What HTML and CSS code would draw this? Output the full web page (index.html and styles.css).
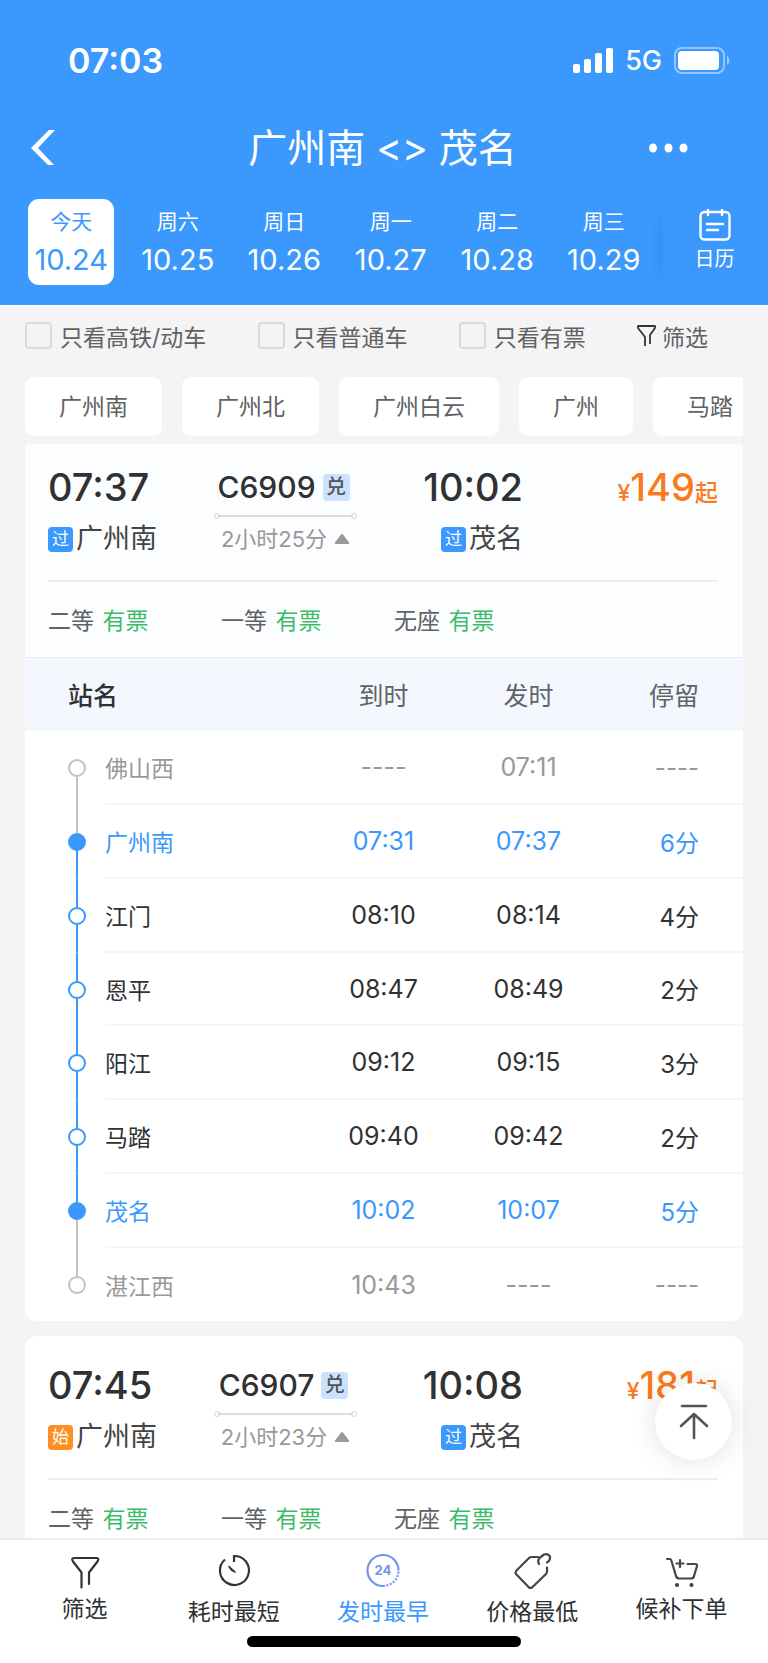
FILE: index.html
```html
<!DOCTYPE html>
<html lang="zh-CN">
<head>
<meta charset="utf-8">
<meta name="viewport" content="width=device-width, initial-scale=1">
<title>广州南 - 茂名</title>
<link rel="stylesheet" href="styles.css">
</head>
<body>
<div class="app">
  <header class="top">
    <div class="status">
      <span class="status-time">07:03</span>
      <div class="status-right">
        <svg class="signal" width="40" height="26" viewBox="0 0 40 26" fill="#fff" aria-hidden="true"><rect x="0" y="16" width="7" height="9" rx="2"/><rect x="11" y="11" width="7" height="14" rx="2"/><rect x="22" y="5" width="7" height="20" rx="2"/><rect x="33" y="0" width="7" height="25" rx="2"/></svg>
        <span class="network">5G</span>
        <svg class="battery" width="56" height="28" viewBox="0 0 56 28" aria-hidden="true"><rect x="1" y="1" width="49" height="25" rx="7" fill="none" stroke="#fff" stroke-opacity=".45" stroke-width="2"/><rect x="4" y="4" width="41" height="19" rx="4" fill="#fff"/><path d="M53 9c3 2 3 7 0 9z" fill="#fff" fill-opacity=".5"/></svg>
      </div>
    </div>
    <div class="titlebar">
      <button class="icon-btn" aria-label="返回"><svg width="26" height="36" viewBox="0 0 26 36" fill="#fff"><path d="M18 0h6L7 18l16 17h-6L0 18z"/></svg></button>
      <h1 class="title">广州南 &lt;&gt; 茂名</h1>
      <button class="icon-btn icon-btn-more" aria-label="更多"><svg width="40" height="10" viewBox="0 0 40 10" fill="#fff"><ellipse cx="4" cy="5" rx="4" ry="4.6"/><ellipse cx="19.500" cy="5" rx="4" ry="4.6"/><ellipse cx="34.500" cy="5" rx="4" ry="4.6"/></svg></button>
    </div>
    <div class="dates">
      <div class="date-list">
        <button class="date date-active"><span class="date-day">今天</span><span class="date-num">10.24</span></button>
        <button class="date"><span class="date-day">周六</span><span class="date-num">10.25</span></button>
        <button class="date"><span class="date-day">周日</span><span class="date-num">10.26</span></button>
        <button class="date"><span class="date-day">周一</span><span class="date-num">10.27</span></button>
        <button class="date"><span class="date-day">周二</span><span class="date-num">10.28</span></button>
        <button class="date"><span class="date-day">周三</span><span class="date-num">10.29</span></button>
      </div>
      <button class="calendar">
        <svg width="32" height="32" viewBox="0 0 32 32" fill="none" stroke="#fff" stroke-width="2.400" stroke-linecap="round"><rect x="1.500" y="3" width="29" height="27.500" rx="4"/><path d="M9 1v5M23 1v5M8 15h16M8 21h11"/></svg>
        <span>日历</span>
      </button>
    </div>
  </header>

  <main class="content">
    <div class="filters">
      <label class="check"><input type="checkbox">只看高铁/动车</label>
      <label class="check"><input type="checkbox">只看普通车</label>
      <label class="check"><input type="checkbox">只看有票</label>
      <button class="filter-btn"><svg width="20" height="22" viewBox="0 0 20 22" fill="none" stroke="#333" stroke-width="1.800" stroke-linejoin="round"><path d="M8 21v-9L1 3V1h17v2l-5 7v9"/></svg>筛选</button>
    </div>
    <div class="tags">
      <button class="tag">广州南</button>
      <button class="tag">广州北</button>
      <button class="tag">广州白云</button>
      <button class="tag">广州</button>
      <button class="tag">马踏</button>
    </div>

    <article class="card card-open">
      <div class="trip">
        <div class="stop">
          <span class="time">07:37</span>
          <span class="station"><i class="badge">过</i>广州南</span>
        </div>
        <div class="middle">
          <span class="code">C6909<i class="exchange">兑</i></span>
          <span class="track"></span>
          <button class="duration">2小时25分<svg width="16" height="10" viewBox="0 0 16 10" fill="#999"><path d="M7 .5q1-1 2 0l6 8q.5 1.500-1 1.500H2q-1.500 0-1-1.500z"/></svg></button>
        </div>
        <div class="stop stop-end">
          <span class="time">10:02</span>
          <span class="station"><i class="badge">过</i>茂名</span>
        </div>
        <div class="price"><span class="price-small">¥</span>149<b class="price-small">起</b></div>
      </div>
      <div class="seats">
        <span>二等 <em>有票</em></span>
        <span>一等 <em>有票</em></span>
        <span>无座 <em>有票</em></span>
      </div>
      <table class="stops">
        <colgroup><col class="w-rail"><col><col class="w-time"><col class="w-time"><col class="w-stay"></colgroup>
        <thead>
          <tr><th class="col-name" colspan="2">站名</th><th class="col-time">到时</th><th class="col-time">发时</th><th class="col-stay">停留</th></tr>
        </thead>
        <tbody>
          <tr class="out first"><td class="rail"><i class="dot"></i></td><td>佛山西</td><td class="col-time">----</td><td class="col-time">07:11</td><td class="col-stay">----</td></tr>
          <tr class="mark board"><td class="rail"><i class="dot"></i></td><td>广州南</td><td class="col-time">07:31</td><td class="col-time">07:37</td><td class="col-stay">6分</td></tr>
          <tr><td class="rail"><i class="dot"></i></td><td>江门</td><td class="col-time">08:10</td><td class="col-time">08:14</td><td class="col-stay">4分</td></tr>
          <tr><td class="rail"><i class="dot"></i></td><td>恩平</td><td class="col-time">08:47</td><td class="col-time">08:49</td><td class="col-stay">2分</td></tr>
          <tr><td class="rail"><i class="dot"></i></td><td>阳江</td><td class="col-time">09:12</td><td class="col-time">09:15</td><td class="col-stay">3分</td></tr>
          <tr><td class="rail"><i class="dot"></i></td><td>马踏</td><td class="col-time">09:40</td><td class="col-time">09:42</td><td class="col-stay">2分</td></tr>
          <tr class="mark alight"><td class="rail"><i class="dot"></i></td><td>茂名</td><td class="col-time">10:02</td><td class="col-time">10:07</td><td class="col-stay">5分</td></tr>
          <tr class="out last"><td class="rail"><i class="dot"></i></td><td>湛江西</td><td class="col-time">10:43</td><td class="col-time">----</td><td class="col-stay">----</td></tr>
        </tbody>
      </table>
    </article>

    <article class="card">
      <div class="trip">
        <div class="stop">
          <span class="time">07:45</span>
          <span class="station"><i class="badge badge-start">始</i>广州南</span>
        </div>
        <div class="middle">
          <span class="code">C6907<i class="exchange">兑</i></span>
          <span class="track"></span>
          <button class="duration">2小时23分<svg width="16" height="10" viewBox="0 0 16 10" fill="#999"><path d="M7 .5q1-1 2 0l6 8q.5 1.500-1 1.500H2q-1.500 0-1-1.500z"/></svg></button>
        </div>
        <div class="stop stop-end">
          <span class="time">10:08</span>
          <span class="station"><i class="badge">过</i>茂名</span>
        </div>
        <div class="price"><span class="price-small">¥</span>181<b class="price-small">起</b></div>
      </div>
      <div class="seats">
        <span>二等 <em>有票</em></span>
        <span>一等 <em>有票</em></span>
        <span>无座 <em>有票</em></span>
      </div>
    </article>
  </main>

  <button class="to-top" aria-label="回到顶部"><svg width="30" height="36" viewBox="0 0 30 36" fill="none" stroke="#555" stroke-width="2.600" stroke-linecap="round" stroke-linejoin="round"><path d="M3 2h24M15 34V10M2 22l13-12 13 12"/></svg></button>

  <footer class="bottom">
    <nav class="nav">
      <button class="nav-item nav-item-tight"><svg width="40" height="40" viewBox="0 0 40 40" fill="none" stroke="#333" stroke-width="2.200" stroke-linejoin="round" stroke-linecap="round"><path d="M16.500 35.500V20.500L8 9.500Q6 6 9 6h22.500Q34.500 6 32.500 9.500L24 20.500V32"/></svg>筛选</button>
      <button class="nav-item"><svg width="40" height="40" viewBox="0 0 40 40" fill="none" stroke="#333" stroke-width="2.200"><path d="M20 10V4a14.500 14.500 0 1 1-9 3.500"/><path d="M15 14.500l6 5.500-3.500-2z" stroke-width="1.600" fill="#333" stroke-linejoin="round"/></svg>耗时最短</button>
      <button class="nav-item nav-item-on"><svg width="40" height="40" viewBox="0 0 40 40" fill="none" stroke="#6f95ec" stroke-width="2.200"><path d="M35.500 18.500A15.500 15.500 0 1 0 20 34"/><path d="M20 34A15.500 15.500 0 0 0 35.500 18.500" stroke-dasharray="2 1.500"/><text class="clock-text" x="20" y="23" text-anchor="middle">24</text></svg>发时最早</button>
      <button class="nav-item"><svg width="40" height="40" viewBox="0 0 40 40" fill="none" stroke="#444" stroke-width="2.200" stroke-linecap="round" stroke-linejoin="round"><path d="M26 5H19.500Q18 5 17 6L4 19q-1 1.500 0 3L17 35.500q1.500 1 3 0L34 22q1-1 1-2.500v-4"/><path d="M27 12q-2-3.500 1-6.500l4-3q4-1.500 6 2 .5 4-3 6"/></svg>价格最低</button>
      <button class="nav-item nav-item-tight"><svg width="40" height="40" viewBox="0 0 40 40" fill="none" stroke="#444" stroke-width="2.200" stroke-linecap="round" stroke-linejoin="round"><path d="M6 7h3q1 0 1.500 2l4.500 15q1 2.500 3 2.500h12q2.500 0 3-2.500l3-10q.5-2-2-2h-7.500M19 8v7M15.500 11.500h7"/><circle cx="16" cy="33" r="1" fill="#444"/><circle cx="30.500" cy="33" r="1" fill="#444"/></svg>候补下单</button>
    </nav>
    <div class="home-bar"></div>
  </footer>
</div>
</body>
</html>
```

FILE: styles.css
```css
:root {
  --blue: #3b98fd;
  --ink: #303133;
  --grey: #999;
}

* { box-sizing: border-box; }

body {
  margin: 0;
  background: #f4f4f4;
  color: var(--ink);
  font-family: Inter, "Noto Sans CJK SC", sans-serif;
  font-size: 23px;
}

button {
  margin: 0;
  padding: 0;
  border: 0;
  background: none;
  color: inherit;
  font: inherit;
}

i, em { font-style: normal; }
svg { display: block; flex: none; }

.app {
  position: relative;
  display: flex;
  flex-direction: column;
  height: 100vh;
}

/* Header */
.top {
  flex: none;
  padding-bottom: 20px;
  border-bottom: 1px solid #fff;
  background: var(--blue);
  color: #fff;
}

.status {
  display: flex;
  align-items: center;
  justify-content: space-between;
  padding: 40px 38px 0 68px;
  line-height: 42px;
}

.status-time { font-size: 34px; font-weight: 600; }
.status-right { display: flex; align-items: center; gap: 12px; }
.network { font-size: 27px; font-weight: 500; }

.titlebar {
  display: grid;
  grid-template-columns: 100px 1fr 100px;
  align-items: center;
  padding: 36px 34px 0 31px;
}

.icon-btn { height: 60px; }
.icon-btn-more { display: flex; align-items: center; padding-left: 15px; }

.title {
  margin: 0;
  font-size: 39px;
  font-weight: 400;
  line-height: 60px;
  text-align: center;
}

.dates { display: flex; padding-top: 21px; }

.date-list {
  flex: 1;
  display: grid;
  grid-template-columns: repeat(6, 1fr);
  justify-items: center;
  padding: 0 6px 0 18px;
}

.date {
  display: flex;
  flex-direction: column;
  align-items: center;
  width: 86px;
  height: 86px;
  padding-top: 7px;
  border-radius: 11px;
}

.date-active { background: #fff; color: var(--blue); }
.date-day { font-size: 21px; line-height: 32px; }
.date-num { font-size: 29px; line-height: 44px; }

.calendar {
  display: flex;
  flex-direction: column;
  align-items: center;
  width: 105px;
  margin-top: 10px;
  padding-right: 2px;
  background: var(--blue);
  box-shadow: -10px 0 10px -8px rgba(0, 60, 140, .12);
  font-size: 20px;
  line-height: 36px;
}

/* Filters */
.content {
  flex: 1;
  min-height: 0;
  padding: 0 25px;
  overflow: hidden auto;
  scrollbar-width: none;
}

.filters {
  display: flex;
  align-items: center;
  justify-content: space-between;
  height: 59px;
  padding-right: 35px;
  color: #606266;
}

.check, .filter-btn { display: flex; align-items: center; }
.check { gap: 8px; }
.filter-btn { gap: 5px; }

.check input {
  appearance: none;
  width: 27px;
  height: 27px;
  margin: 0;
  border: 2px solid #dadada;
  border-radius: 4px;
}

.tags {
  display: flex;
  gap: 20px;
  margin: 12px 0 8px;
  overflow: hidden;
}

.tag {
  flex: none;
  height: 59px;
  padding: 0 34px 3px;
  border-radius: 9px;
  background: #fff;
  color: #606266;
}

/* Train cards */
.card {
  margin-bottom: 15px;
  border-radius: 12px;
  background: #fff;
  overflow: hidden;
}

.card-open { border-radius: 4px 4px 12px 12px; background: #fcfdff; }

.trip {
  display: grid;
  grid-template-columns: 166fr 143fr 166fr 195fr;
  margin: 0 25px 0 23px;
  padding: 26px 0 25px;
  border-bottom: 2px solid #efefef;
}

.card-open .trip { padding-top: 20px; }

.stop { display: flex; flex-direction: column; gap: 13px; }
.stop-end { align-items: flex-end; }

.time { font-size: 38px; font-weight: 500; line-height: 46px; }

.station {
  display: flex;
  align-items: center;
  gap: 3px;
  color: #444;
  font-size: 27px;
  line-height: 32px;
}

.badge {
  width: 25px;
  border-radius: 4px;
  background: var(--blue);
  color: #fff;
  font-size: 17px;
  line-height: 25px;
  text-align: center;
}

.badge-start { background: #fd8f24; }

.middle { display: flex; flex-direction: column; align-items: center; }

.code {
  display: flex;
  align-items: center;
  gap: 7px;
  padding-right: 4px;
  font-size: 30px;
  font-weight: 500;
  line-height: 46px;
}

.exchange {
  width: 27px;
  border-radius: 4px;
  background: #cbe2ff;
  color: #555;
  font-size: 20px;
  line-height: 27px;
  text-align: center;
}

.track {
  display: flex;
  align-items: center;
  justify-content: space-between;
  width: 100%;
  margin: 3px 0 4px;
  background: linear-gradient(#dcdcdc, #dcdcdc) center / calc(100% - 8px) 2px no-repeat;
}

.track::before, .track::after {
  content: "";
  width: 4px;
  height: 4px;
  border: 1px solid #d5d5d5;
  border-radius: 50%;
}

.duration {
  display: flex;
  align-items: center;
  gap: 7px;
  color: var(--grey);
  font-size: 22px;
  line-height: 32px;
  white-space: nowrap;
}

.price {
  color: #fa7a1e;
  font-size: 38px;
  font-weight: 500;
  line-height: 46px;
  text-align: right;
  white-space: nowrap;
}

.price-small { font-size: 23px; font-weight: 500; }

.seats {
  display: grid;
  grid-template-columns: 173fr 173fr 324fr;
  margin: 0 25px 0 23px;
  padding-top: 4px;
  color: #606266;
  line-height: 71px;
}

.seats em { color: #3dbb68; margin-left: 2px; }

/* Stop list */
.stops {
  width: 100%;
  border-collapse: separate;
  border-spacing: 0;
  table-layout: fixed;
  background: #fff;
}

.w-rail { width: 80px; }
.w-time { width: 145px; }
.w-stay { width: 142px; }

.stops th {
  height: 74px;
  padding: 0 0 2px;
  border-top: 1px solid #ebeef2;
  background: #f4f8fe;
  color: #606266;
  font-size: 25px;
  font-weight: 400;
}

.stops .col-name {
  padding-left: 43px;
  color: var(--ink);
  font-weight: 500;
  text-align: left;
}

.stops td { height: 74px; padding: 0; border-bottom: 2px solid #f5f5f5; }
.stops tbody tr:nth-child(4n) td { height: 73px; }
.stops .col-time { text-align: center; }
.stops .col-stay { padding-right: 44px; text-align: right; }
.stops td.col-time { font-size: 25px; }
.stops td.col-stay { font-size: 24px; }

.stops .rail {
  --up: var(--blue);
  --down: var(--blue);
  padding-left: 43px;
  border-bottom: 0;
  background:
    linear-gradient(var(--up), var(--up)) 51px 0 / 2px 51% no-repeat,
    linear-gradient(var(--down), var(--down)) 51px 100% / 2px 51% no-repeat;
}

.dot {
  display: block;
  width: 18px;
  height: 18px;
  border: 2px solid var(--blue);
  border-radius: 50%;
  background: #fff;
}

.stops .mark { color: var(--blue); }
.stops .out { color: var(--grey); }
.mark .dot { background: var(--blue); }
.out .dot { border-color: #c2c2c2; }
.stops .first .rail { --up: transparent; --down: #c2c2c2; }
.stops .board .rail { --up: #c2c2c2; }
.stops .alight .rail { --down: #c2c2c2; }
.stops .last .rail { --up: #c2c2c2; --down: transparent; }
.stops .last td { border-bottom: 0; }

/* Floating button over the list */
.to-top {
  position: absolute;
  right: 36px;
  bottom: 203px;
  display: flex;
  align-items: center;
  justify-content: center;
  width: 77px;
  height: 77px;
  border-radius: 50%;
  background: #fff;
  box-shadow: 0 0 28px rgba(0, 0, 0, .13);
}

/* Bottom bar */
.bottom {
  flex: none;
  padding-bottom: 16px;
  border-top: 2px solid #ececec;
  background: #fff;
}

.nav {
  display: grid;
  grid-template-columns: repeat(5, 1fr);
  height: 96px;
  padding: 12px 12px 0 10px;
}

.nav-item {
  display: flex;
  flex-direction: column;
  align-items: center;
  gap: 4px;
  line-height: 32px;
}

.nav-item-tight { gap: 1px; }
.nav-item-on { color: var(--blue); }

.clock-text {
  fill: #6f95ec;
  stroke: none;
  font-size: 13px;
  font-weight: 700;
}

.home-bar {
  width: 274px;
  height: 11px;
  margin: 0 auto;
  border-radius: 6px;
  background: #000;
}
```
